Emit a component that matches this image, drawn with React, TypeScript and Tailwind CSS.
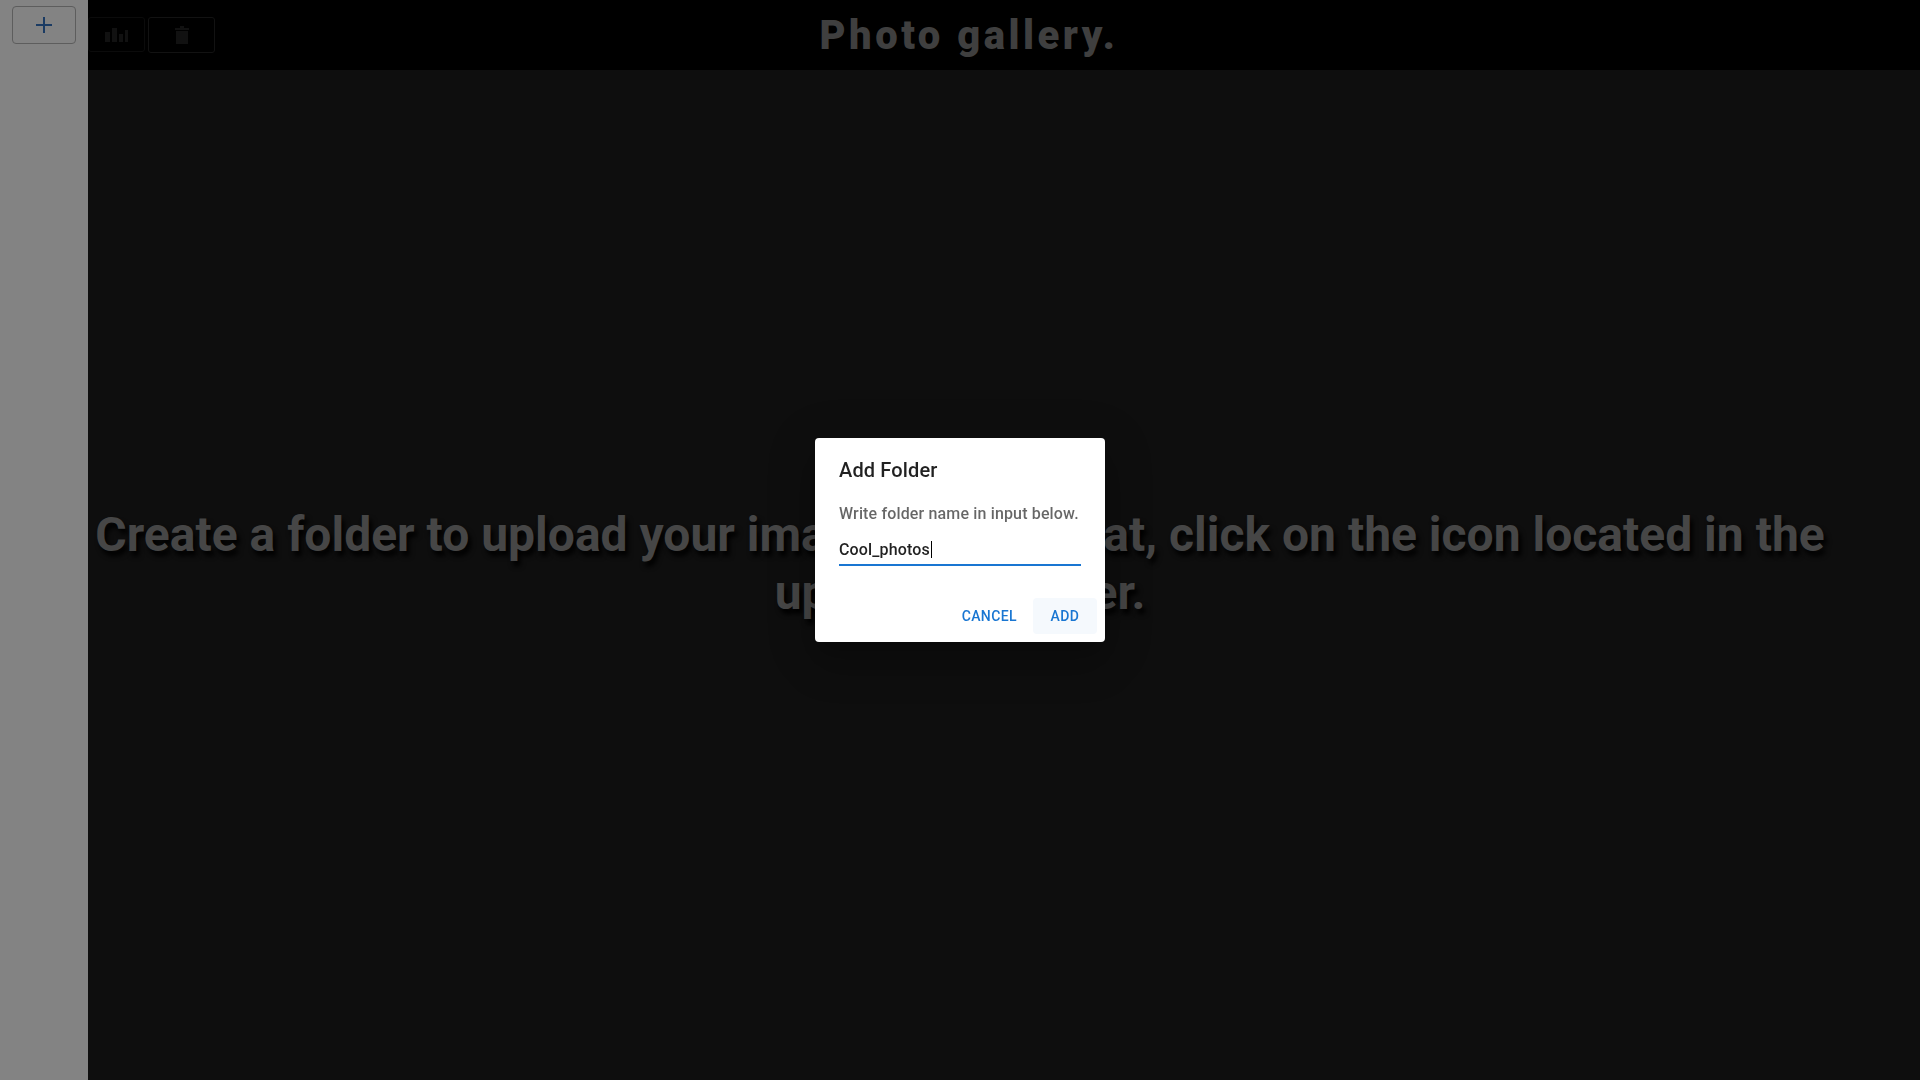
import React from "react";

function BarsIcon() {
  return (
    <svg width="24" height="14" viewBox="0 0 24 14" fill="#111111">
      <rect x="0" y="4" width="5" height="10" />
      <rect x="7" y="0" width="5" height="14" />
      <rect x="14" y="6" width="4" height="8" />
      <rect x="20" y="2" width="3" height="12" />
    </svg>
  );
}

function BinIcon() {
  return (
    <svg width="14" height="18" viewBox="0 0 14 18" fill="#111111">
      <rect x="0" y="2" width="14" height="2" />
      <rect x="5" y="0" width="4" height="2" />
      <rect x="1" y="5" width="12" height="13" />
    </svg>
  );
}

export default function App() {
  return (
    <div
      className="relative flex h-screen w-full overflow-hidden"
      style={{ fontFamily: "Roboto, 'Noto Sans', sans-serif" }}
    >
      <aside className="w-[88px] shrink-0 bg-[#838383] pt-[6px] pl-[12px]">
        <button className="flex h-[38px] w-[64px] items-center justify-center rounded-[4px] border border-[#5d5d5d]">
          <svg width="18" height="18" viewBox="0 0 18 18" stroke="#1b3b63" strokeWidth="2">
            <line x1="9" y1="1" x2="9" y2="17" />
            <line x1="1" y1="9" x2="17" y2="9" />
          </svg>
        </button>
      </aside>
      <main className="flex flex-1 flex-col bg-[#0e0e0e]">
        <header className="flex h-[70px] shrink-0 items-center bg-black">
          <div className="flex items-center gap-[3px] pb-[1px]">
            <div className="flex h-[35px] w-[57px] items-center justify-center rounded-[3px] border border-[#0b0b0b] bg-black">
              <BarsIcon />
            </div>
            <div className="flex h-[36px] w-[67px] items-center justify-center rounded-[3px] border border-[#121212] bg-black">
              <BinIcon />
            </div>
          </div>
          <div className="flex flex-1 justify-center pr-[197px] pt-[2px]">
            <h1 className="text-[40px] font-black tracking-[3.5px] text-[#3f3f3f] [text-shadow:2px_2px_4px_#000]">
              Photo gallery.
            </h1>
          </div>
        </header>
        <div className="flex-1 pt-[436px] pr-[88px]">
          <p className="text-center text-[48px] leading-[1.2] font-bold text-[#464646] [text-shadow:3px_5px_5px_#000]">
            Create a folder to upload your images. To do that, click on the icon located in the upper left corner.
          </p>
        </div>
      </main>

      <div className="fixed inset-0 flex items-center justify-center">
        <div className="w-[290px] rounded-[4px] bg-white shadow-[0_11px_15px_-7px_rgba(0,0,0,0.2),0_24px_38px_3px_rgba(0,0,0,0.14),0_9px_46px_8px_rgba(0,0,0,0.12)]">
          <h2 className="px-[24px] py-[16px] text-[20px] leading-[32px] font-medium tracking-[0.15px] text-[rgba(0,0,0,0.87)]">
            Add Folder
          </h2>
          <div className="px-[24px] pb-[20px]">
            <p className="text-[16px] leading-[24px] font-medium tracking-[0.15px] text-[rgba(0,0,0,0.6)]">
              Write folder name in input below.
            </p>
            <div className="mt-[8px] mb-[4px] border-b-2 border-[#1976d2] pt-[4px] pb-[3px]">
              <div className="flex h-[23px] items-center text-[16px] font-medium text-[rgba(0,0,0,0.87)] tracking-[0.15px]">
                <span>Cool_photos</span>
                <span className="ml-[1px] inline-block h-[17px] w-[1px] bg-black" />
              </div>
            </div>
          </div>
          <div className="flex items-center justify-end p-[8px]">
            <button className="h-[36px] min-w-[64px] rounded-[4px] px-[8px] text-[14px] font-medium tracking-[0.4px] text-[#1976d2] uppercase">
              Cancel
            </button>
            <button className="ml-[8px] h-[36px] min-w-[64px] rounded-[4px] bg-[#f5f9fd] px-[8px] text-[14px] font-medium tracking-[0.4px] text-[#1976d2] uppercase">
              Add
            </button>
          </div>
        </div>
      </div>
    </div>
  );
}
